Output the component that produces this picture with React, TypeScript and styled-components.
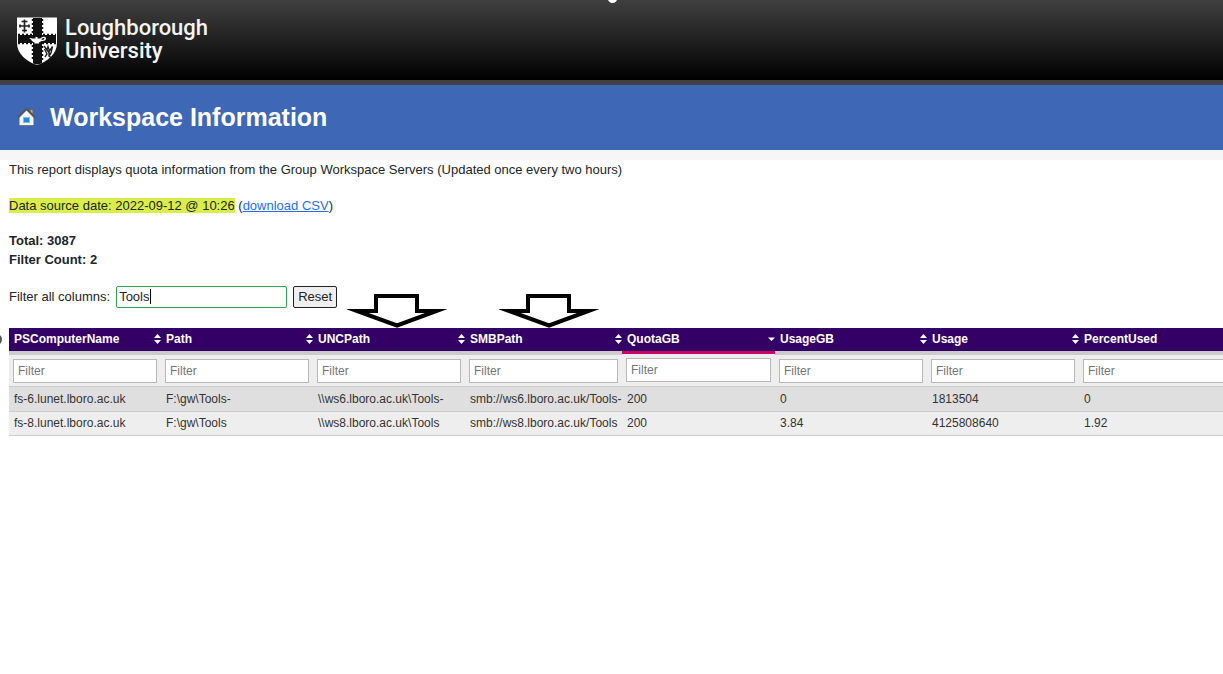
import React, { useState } from "react";
import styled, { createGlobalStyle, css } from "styled-components";

const GlobalStyle = createGlobalStyle`
  *, *::before, *::after { box-sizing: border-box; }
  body {
    margin: 0;
    background: #fff;
    color: #212529;
    font: 13px/20px "Liberation Sans", Arial, sans-serif;
  }
`;

const Page = styled.div`
  overflow-x: clip;
`;

const Brand = styled.header`
  position: relative;
  display: flex;
  align-items: flex-start;
  gap: 7px;
  height: 85px;
  padding: 16px 16px 0;
  background: linear-gradient(#404040, #000);
  border-bottom: 5px solid #404040;
  background-clip: padding-box;
`;

const Knob = styled.span`
  position: absolute;
  top: -5px;
  left: 50%;
  width: 9px;
  height: 8px;
  margin-left: -4px;
  border-radius: 50%;
  background: #fff;
`;

const Wordmark = styled.div`
  color: #f4f4f4;
  font: 500 22px/23px Roboto, "Liberation Sans", sans-serif;
`;

const TitleBar = styled.div`
  display: flex;
  align-items: center;
  gap: 14px;
  height: 65px;
  padding: 0 0 2px 17px;
  background: #3e68b6;
`;

const HomeLink = styled.a`
  display: flex;
`;

const Title = styled.h1`
  margin: 0;
  color: #fff;
  font-size: 25px;
  line-height: 32px;
`;

const Strip = styled.div`
  height: 10px;
  background: #f6f6f6;
`;

const Content = styled.main`
  padding-left: 9px;
`;

const Line = styled.p<{ $gap?: number }>`
  margin: 0 0 ${(p) => p.$gap ?? 0}px;
  line-height: 19px;
`;

const Mark = styled.mark`
  background: #d9ee4b;
  color: inherit;
`;

const Link = styled.a`
  color: #1f6fee;
`;

const FilterForm = styled.form`
  display: flex;
  align-items: center;
  height: 22px;
  margin-bottom: 20px;
`;

const SearchBox = styled.span`
  position: relative;
  display: flex;
  margin: 0 6px;
`;

const SearchInput = styled.input`
  width: 171px;
  height: 22px;
  padding: 0 2px 1px;
  border: 1px solid #2fa351;
  border-radius: 2px;
  outline: 0;
  color: #212529;
  font: inherit;
`;

const Caret = styled.span`
  position: absolute;
  top: 3px;
  left: 34px;
  width: 1px;
  height: 15px;
  background: #000;
`;

const ResetButton = styled.button`
  height: 22px;
  padding: 0 4px 2px;
  border: 1px solid #222;
  border-radius: 2px;
  background: #efefef;
  color: #212529;
  font: inherit;
`;

const TableArea = styled.div`
  position: relative;
`;

const EdgeDot = styled.span`
  position: absolute;
  top: 6px;
  left: -18px;
  width: 11px;
  height: 11px;
  border-radius: 50%;
  background: #555;
`;

const Table = styled.table`
  table-layout: fixed;
  width: calc(100% + 16px);
  min-width: 1230px;
  border-collapse: separate;
  border-spacing: 0;
  font-size: 12px;
  line-height: 16px;
`;

const Col = styled.col<{ $width?: number }>`
  ${(p) => p.$width && `width: ${p.$width}px;`}
`;

const HeadCell = styled.th<{ $active?: boolean }>`
  position: relative;
  height: 27px;
  padding: 0;
  border-bottom: 4px solid #ccc;
  background: #330066;
  text-align: left;
  vertical-align: top;
  ${(p) =>
    p.$active &&
    css`
      background: linear-gradient(#330066 23px, #cc0066 23px 26px, #eee 26px);
      border-bottom: 0;
    `}
`;

const SortButton = styled.button`
  display: flex;
  align-items: center;
  justify-content: space-between;
  width: 100%;
  height: 23px;
  padding: 0 0 1px 5px;
  border: 0;
  background: none;
  color: #fff;
  font: bold 12px/16px "Liberation Sans", Arial, sans-serif;
`;

const FilterCell = styled.td<{ $active?: boolean }>`
  height: 32px;
  padding: ${(p) => (p.$active ? "3px 4px 4px" : "4px 4px 3px")};
  border-bottom: 1px solid #ccc;
  background: #eee;
`;

const FilterInput = styled.input`
  display: block;
  width: 100%;
  height: 24px;
  padding: 0 4px;
  border: 1px solid #b9b9b9;
  outline: 0;
  background: #fff;
  font: inherit;
  &::placeholder {
    color: #757575;
    opacity: 1;
  }
`;

const Cell = styled.td<{ $shade?: boolean }>`
  height: ${(p) => (p.$shade ? 25 : 24)}px;
  padding: 0 0 1px 5px;
  border-bottom: 1px solid #ccc;
  background: ${(p) => (p.$shade ? "#dfdfdf" : "#eee")};
  color: #333;
  white-space: nowrap;
`;

const Pointer = styled.svg`
  position: absolute;
  left: 34px;
  bottom: 100%;
  display: block;
`;

const Crest = () => (
  <svg width="42" height="51" viewBox="0 0 42 51" aria-hidden="true">
    <path d="M1 1.500H41V27C41 38 31 46 21 49C11 46 1 38 1 27Z" fill="#fff" />
    <path d="M2 19H40V27H2Z" fill="#111" />
    <path d="M17 2H26V47.500L21 48.500L17 47.500Z" fill="#111" />
    <path d="M16.500 3V18.500H2M26.500 3V18.500H40M2 27.500H16.500V45M40 27.500H26.500V45" fill="none" stroke="#111" strokeWidth="1.500" strokeDasharray="2 2" />
    <path d="M8.500 3.500V16.500M4 10H13M5.500 5.500H11.500M6 14.500H11M4 8.500V11.500M13 8.500V11.500" stroke="#222" strokeWidth="1.700" />
    <path d="M13 22C15 22 16 22.500 17.500 22.500H19.500V21H21.500V22.500H24.500C26 20.500 30 20 30 22.500C30 24.500 27.500 25 25.500 25L23 26.500V27.500H18.500V26.500C16 26 16 23.500 13 22Z" fill="#fff" />
    <path d="M25.500 23C27 21.500 28.500 21.800 28.500 22.700C28.500 23.500 27 23.900 25.500 23.800Z" fill="#111" />
    <path d="M28 30L31 34L32 30.500L33.500 35L36.500 30.500L35 37L33 40L35.500 42M28.500 33L31 38L29 41M33 34V40M31 34L34 38" fill="none" stroke="#222" strokeWidth="1.400" />
  </svg>
);

const HomeIcon = () => (
  <svg width="19" height="20" viewBox="0 0 19 20" aria-hidden="true">
    <path d="M13 2.500H16V8L13 6Z" fill="#aaa" stroke="#666" />
    <path d="M2.500 10L9.500 3L16.500 10V18H2.500Z" fill="#f5f4f0" />
    <path d="M2.500 18.500H16.500" stroke="#777" />
    <path d="M1 10.500L9.500 2L18 10.500" fill="none" stroke="#555" strokeWidth="2" />
    <rect x="6.500" y="10.500" width="6" height="5" fill="#2288df" stroke="#76bdf0" />
  </svg>
);

const SortIcon = ({ descending }: { descending?: boolean }) => (
  <svg width="7" height="10" viewBox="0 0 7 10" aria-hidden="true">
    {!descending && <path d="M0 4L3.500 0L7 4Z" fill="#fff" />}
    <path d={descending ? "M0 3.500H7L3.500 7Z" : "M0 6H7L3.500 10Z"} fill="#fff" />
  </svg>
);

const DownArrow = () => (
  <Pointer width="100" height="34" viewBox="0 0 100 34" aria-hidden="true">
    <path d="M29 2H70V17H89.500L50 31.500L10 17H29Z" fill="#fff" stroke="#000" strokeWidth="4" strokeMiterlimit="10" />
  </Pointer>
);

type Column = { name: string; width?: number; sorted?: boolean; arrow?: boolean };

const columns: Column[] = [
  { name: "PSComputerName", width: 152 },
  { name: "Path", width: 152 },
  { name: "UNCPath", width: 152, arrow: true },
  { name: "SMBPath", width: 157, arrow: true },
  { name: "QuotaGB", width: 153, sorted: true },
  { name: "UsageGB", width: 152 },
  { name: "Usage", width: 152 },
  { name: "PercentUsed" },
];

const rows = [
  ["fs-6.lunet.lboro.ac.uk", "F:\\gw\\Tools-", "\\\\ws6.lboro.ac.uk\\Tools-", "smb://ws6.lboro.ac.uk/Tools-", "200", "0", "1813504", "0"],
  ["fs-8.lunet.lboro.ac.uk", "F:\\gw\\Tools", "\\\\ws8.lboro.ac.uk\\Tools", "smb://ws8.lboro.ac.uk/Tools", "200", "3.84", "4125808640", "1.92"],
];

export default function App() {
  const [query, setQuery] = useState("Tools");
  return (
    <Page>
      <GlobalStyle />
      <Brand>
        <Knob />
        <Crest />
        <Wordmark>
          Loughborough
          <br />
          University
        </Wordmark>
      </Brand>
      <TitleBar>
        <HomeLink href="#" aria-label="Home">
          <HomeIcon />
        </HomeLink>
        <Title>Workspace Information</Title>
      </TitleBar>
      <Strip />
      <Content>
        <Line $gap={17}>
          This report displays quota information from the Group Workspace Servers (Updated once every two hours)
        </Line>
        <Line $gap={16}>
          <Mark>Data source date: 2022-09-12 @ 10:26</Mark> (<Link href="#">download CSV</Link>)
        </Line>
        <Line>
          <b>Total: 3087</b>
        </Line>
        <Line $gap={17}>
          <b>Filter Count: 2</b>
        </Line>
        <FilterForm onSubmit={(e) => e.preventDefault()}>
          <label htmlFor="all">Filter all columns:</label>
          <SearchBox>
            <SearchInput id="all" value={query} onChange={(e) => setQuery(e.target.value)} />
            <Caret />
          </SearchBox>
          <ResetButton type="button" onClick={() => setQuery("")}>
            Reset
          </ResetButton>
        </FilterForm>
        <TableArea>
          <EdgeDot />
          <Table>
            <colgroup>
              {columns.map((c) => (
                <Col key={c.name} $width={c.width} />
              ))}
            </colgroup>
            <thead>
              <tr>
                {columns.map((c) => (
                  <HeadCell key={c.name} $active={c.sorted}>
                    {c.arrow && <DownArrow />}
                    <SortButton type="button">
                      {c.name}
                      <SortIcon descending={c.sorted} />
                    </SortButton>
                  </HeadCell>
                ))}
              </tr>
              <tr>
                {columns.map((c) => (
                  <FilterCell key={c.name} $active={c.sorted}>
                    <FilterInput placeholder="Filter" aria-label={`Filter ${c.name}`} />
                  </FilterCell>
                ))}
              </tr>
            </thead>
            <tbody>
              {rows.map((r, i) => (
                <tr key={r[0]}>
                  {r.map((v, j) => (
                    <Cell key={j} $shade={i % 2 === 0}>
                      {v}
                    </Cell>
                  ))}
                </tr>
              ))}
            </tbody>
          </Table>
        </TableArea>
      </Content>
    </Page>
  );
}
